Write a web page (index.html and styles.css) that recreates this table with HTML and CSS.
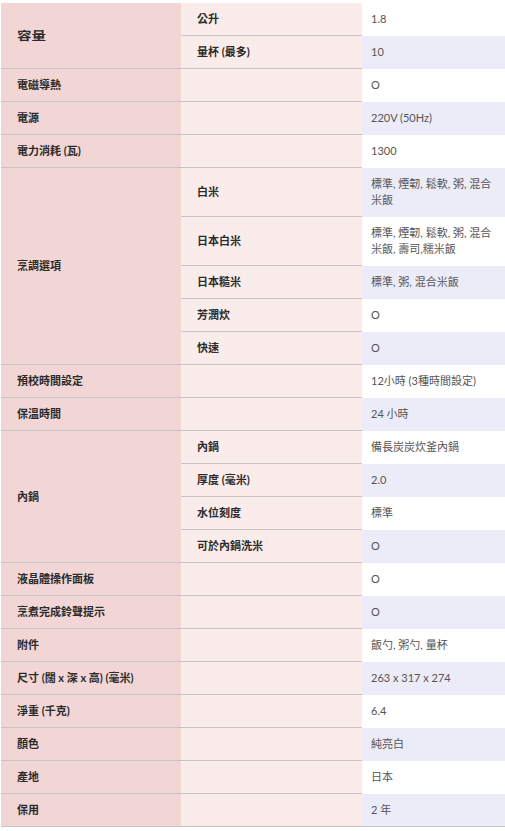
FILE: index.html
```html
<!DOCTYPE html>
<html lang="zh-Hant">
<head>
<meta charset="utf-8">
<title>規格</title>
<link rel="stylesheet" href="styles.css">
</head>
<body>
<table class="spec">
  <colgroup>
    <col class="c1"><col class="c2"><col class="c3">
  </colgroup>
  <tbody>
    <tr class="odd"><td class="k" rowspan="2"><span class="wide">容量</span></td><td class="s">公升</td><td class="v">1.8</td></tr>
    <tr class="even"><td class="s">量杯 (最多)</td><td class="v">10</td></tr>
    <tr class="odd"><td class="k">電磁導熱</td><td class="s"></td><td class="v">O</td></tr>
    <tr class="even"><td class="k">電源</td><td class="s"></td><td class="v">220V (50Hz)</td></tr>
    <tr class="odd"><td class="k">電力消耗 (瓦)</td><td class="s"></td><td class="v">1300</td></tr>
    <tr class="even"><td class="k" rowspan="5">烹調選項</td><td class="s">白米</td><td class="v">標準, 煙韌, 鬆軟, 粥, 混合米飯</td></tr>
    <tr class="odd"><td class="s">日本白米</td><td class="v">標準, 煙韌, 鬆軟, 粥, 混合米飯, 壽司,糯米飯</td></tr>
    <tr class="even"><td class="s">日本糙米</td><td class="v">標準, 粥, 混合米飯</td></tr>
    <tr class="odd"><td class="s">芳潤炊</td><td class="v">O</td></tr>
    <tr class="even"><td class="s">快速</td><td class="v">O</td></tr>
    <tr class="odd"><td class="k">預校時間設定</td><td class="s"></td><td class="v">12小時 (3種時間設定)</td></tr>
    <tr class="even"><td class="k">保溫時間</td><td class="s"></td><td class="v">24 小時</td></tr>
    <tr class="odd"><td class="k" rowspan="4">內鍋</td><td class="s">內鍋</td><td class="v">備長炭炭炊釜內鍋</td></tr>
    <tr class="even"><td class="s">厚度 (毫米)</td><td class="v">2.0</td></tr>
    <tr class="odd"><td class="s">水位刻度</td><td class="v">標準</td></tr>
    <tr class="even"><td class="s">可於內鍋洗米</td><td class="v">O</td></tr>
    <tr class="odd"><td class="k">液晶體操作面板</td><td class="s"></td><td class="v">O</td></tr>
    <tr class="even"><td class="k">烹煮完成鈴聲提示</td><td class="s"></td><td class="v">O</td></tr>
    <tr class="odd"><td class="k">附件</td><td class="s"></td><td class="v">飯勺, 粥勺, 量杯</td></tr>
    <tr class="even"><td class="k">尺寸 (闊 x 深 x 高) (毫米)</td><td class="s"></td><td class="v">263 x 317 x 274</td></tr>
    <tr class="odd"><td class="k">淨重 (千克)</td><td class="s"></td><td class="v">6.4</td></tr>
    <tr class="even"><td class="k">顏色</td><td class="s"></td><td class="v">純亮白</td></tr>
    <tr class="odd"><td class="k">產地</td><td class="s"></td><td class="v">日本</td></tr>
    <tr class="even last"><td class="k">保用</td><td class="s"></td><td class="v">2 年</td></tr>
  </tbody>
</table>
</body>
</html>
```
FILE: styles.css
```css
html, body {
  margin: 0;
  padding: 0;
  background: #ffffff;
}

body {
  font-family: Lato, "Noto Sans CJK TC", sans-serif;
  font-size: 11px;
  color: #333333;
}

.spec {
  margin: 3px 0 0 1px;
  width: 504px;
  table-layout: fixed;
  border-collapse: separate;
  border-spacing: 0;
}

.c1 { width: 180px; }
.c2 { width: 181px; }
.c3 { width: 143px; }

.spec td {
  padding: 8px 16px;
  line-height: 16px;
  vertical-align: middle;
  border-bottom: 1px solid #c9c3c3;
  text-align: left;
}

.spec td.k {
  background: #f1d6d5;
  font-weight: 700;
  color: #2b2b2b;
}

.spec td.s {
  background: #f9eceb;
  font-weight: 700;
  color: #2b2b2b;
}

.wide {
  display: inline-block;
  transform: scaleX(1.32);
  transform-origin: left center;
}

.spec td.v {
  padding: 8px 8px 8px 9px;
  color: #555555;
  border-bottom-color: transparent;
}

.spec tr.odd td.v { background: #ffffff; }
.spec tr.even td.v { background: #ececf8; }

.spec tr.last td.v { border-bottom-color: #c9c3c3; }
```
